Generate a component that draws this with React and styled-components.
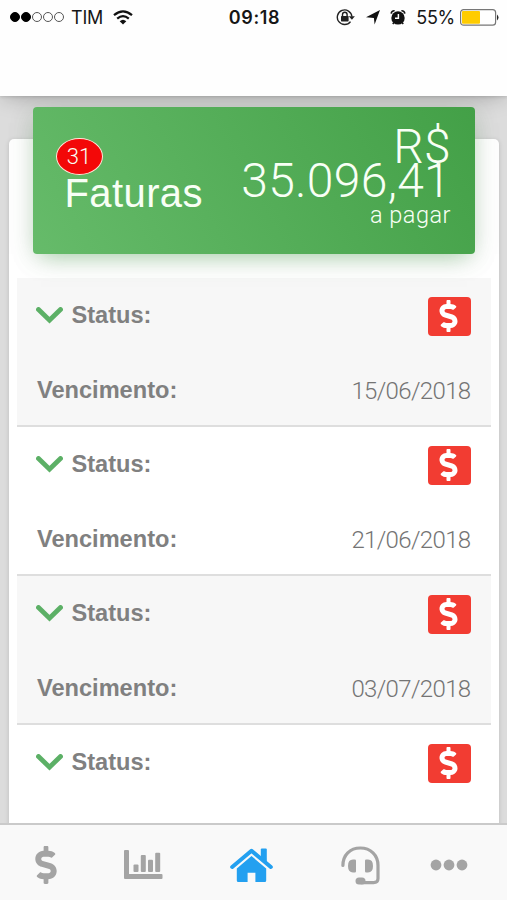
import styled, { createGlobalStyle } from "styled-components";
import { FaDollarSign } from "react-icons/fa";

const GlobalStyle = createGlobalStyle`
  * {
    box-sizing: border-box;
  }
  body {
    margin: 0;
    font-family: "Liberation Sans", Arial, sans-serif;
  }
`;

const Screen = styled.div`
  width: 507px;
  height: 900px;
  display: flex;
  flex-direction: column;
  overflow: hidden;
  background-color: #dcdcdc;
`;

const Header = styled.header`
  flex: none;
  height: 96px;
  background-color: #fefefe;
  box-shadow: 0 1px 3px rgba(0, 0, 0, 0.12), 0 4px 20px -4px rgba(0, 0, 0, 0.28);
`;

const StatusBar = styled.div`
  height: 34px;
  display: grid;
  grid-template-columns: 1fr auto 1fr;
  align-items: center;
  padding: 0 8px 0 10px;
  font-family: Inter, sans-serif;
  font-size: 18px;
  color: #161616;
`;

const StatusSide = styled.div`
  display: flex;
  align-items: center;
  justify-content: ${(props) => (props.$end ? "flex-end" : "flex-start")};
`;

const Signal = styled.div`
  display: flex;
  gap: 1px;
  margin-right: 7px;
`;

const Dot = styled.span`
  width: 10px;
  height: 10px;
  border-radius: 50%;
  border: 1px solid ${(props) => (props.$on ? "#000" : "#555")};
  background-color: ${(props) => (props.$on ? "#000" : "transparent")};
`;

const Carrier = styled.span`
  letter-spacing: -0.2px;
  margin-right: 10px;
`;

const Clock = styled.span`
  font-weight: 600;
  letter-spacing: 0.6px;
`;

const Percent = styled.span`
  margin: 0 5px 0 10px;
  letter-spacing: -0.3px;
`;

const Content = styled.main`
  flex: 1;
  min-height: 0;
  overflow: hidden;
  padding: 43px 8px 0 8.5px;
`;

const Card = styled.section`
  height: 800px;
  padding: 0 8px;
  border-radius: 5px;
  background-color: #fff;
  box-shadow: 0 1px 5px rgba(0, 0, 0, 0.14);
`;

const Summary = styled.div`
  position: relative;
  display: flex;
  justify-content: space-between;
  height: 147px;
  margin: 0 16px 24px;
  padding: 23px 24px 0 32px;
  top: -32px;
  margin-bottom: -8px;
  border-radius: 4px;
  color: #f8fff5;
  background: linear-gradient(60deg, #66bb6a, #43a047);
  box-shadow: 0 8px 22px -8px rgba(76, 175, 80, 0.5),
    0 4px 28px rgba(0, 0, 0, 0.1);
`;

const Badge = styled.span`
  position: absolute;
  left: 23px;
  top: 31px;
  width: 47px;
  height: 37px;
  display: flex;
  align-items: center;
  justify-content: center;
  border: 1.5px solid #ffe9dc;
  border-radius: 50%;
  background-color: #f30808;
  font-family: Roboto, sans-serif;
  font-weight: 300;
  font-size: 22px;
`;

const SummaryTitle = styled.h2`
  margin: 40px 0 0;
  font-size: 40px;
  line-height: 46px;
  font-weight: 400;
  letter-spacing: 0.4px;
`;

const Amount = styled.div`
  width: 218px;
  text-align: right;
  font-family: Roboto, sans-serif;
  font-weight: 300;
  font-size: 48px;
  line-height: 33.5px;
  letter-spacing: 0.3px;
`;

const AmountLabel = styled.div`
  font-size: 23.5px;
  line-height: 36px;
  letter-spacing: 0.5px;
`;

const Row = styled.div`
  height: 149px;
  padding: 18px 20.5px 0;
  border-bottom: 2px solid #dedede;
  background-color: ${(props) => (props.$striped ? "#f7f7f7" : "#fff")};
`;

const Line = styled.div`
  display: flex;
  align-items: center;
  justify-content: space-between;
  height: ${(props) => props.$height}px;
`;

const Label = styled.span`
  display: flex;
  align-items: center;
  gap: 9px;
  font-size: 23.6px;
  font-weight: 700;
  color: #808080;
`;

const DueDate = styled.span`
  font-family: Roboto, sans-serif;
  font-size: 24px;
  font-weight: 300;
  letter-spacing: -0.65px;
  color: #747474;
`;

const PayButton = styled.button`
  width: 43px;
  height: 39px;
  display: flex;
  align-items: center;
  justify-content: center;
  margin-top: 2px;
  padding: 0 1px 1px 0;
  border: none;
  border-radius: 4px;
  background-color: #f23c32;
  color: #fff;
  cursor: pointer;
`;

const TabBar = styled.nav`
  flex: none;
  height: 77px;
  display: grid;
  grid-template-columns: 91px 104px 113px 104px 73px;
  align-items: center;
  padding-top: 5px;
  border-top: 2px solid #cacaca;
  background-color: #f9f9f9;
`;

const Tab = styled.a`
  display: flex;
  align-items: center;
  justify-content: center;
  color: ${(props) => (props.$active ? "#23a0f0" : "#a4a4a4")};
`;

const WifiIcon = () => (
  <svg width="20" height="15" viewBox="0 0 20 15" fill="none" stroke="#111" strokeWidth="2.2">
    <path d="M1 5.2Q10-2.5 19 5.2M4.2 8.6Q10 3.6 15.8 8.6" />
    <path d="M6.7 11.2Q10 8.2 13.3 11.2L10 14.5Z" fill="#111" stroke="none" />
  </svg>
);

const LockIcon = () => (
  <svg width="19" height="18" viewBox="0 0 19 18" fill="none" stroke="#222">
    <path d="M14.5 13.6A7.3 7.3 0 1 1 15.9 8.6" strokeWidth="1.4" />
    <path d="M12.8 8.2H18.9L15.9 11.8Z" fill="#222" stroke="none" />
    <rect x="5" y="8" width="7.6" height="5.4" rx=".6" fill="#222" stroke="none" />
    <path d="M6.5 8V6.6a2.3 2.3 0 0 1 4.6 0V8" strokeWidth="1.4" />
  </svg>
);

const LocationIcon = () => (
  <svg width="14" height="15" viewBox="0 0 14 15" style={{ margin: "0 10px 0 11px" }}>
    <path d="M14 0L8.6 14.5L7.9 8L0 7.2Z" fill="#111" />
  </svg>
);

const AlarmIcon = () => (
  <svg width="16" height="17" viewBox="0 0 16 17">
    <circle cx="8" cy="8.9" r="6.7" fill="#111" />
    <path d="M1.2 4.6A3 3 0 0 1 4.6 1.8M14.8 4.6A3 3 0 0 0 11.4 1.8M3.8 13.6L2.8 15M12.2 13.6L13.2 15" stroke="#111" strokeWidth="1.6" fill="none" />
    <path d="M8.4 5V9.3H5" stroke="#fff" strokeWidth="1.5" fill="none" />
  </svg>
);

const BatteryIcon = () => (
  <svg width="39" height="17" viewBox="0 0 39 17">
    <rect x=".6" y=".6" width="35" height="15.6" rx="3" fill="#fff" stroke="#777" strokeWidth="1.2" />
    <rect x="2" y="2" width="18" height="12.8" rx="1" fill="#fc0" />
    <path d="M37 5.5Q40 8.5 37 11.5Z" fill="#222" />
  </svg>
);

const ChevronIcon = () => (
  <svg width="27" height="17" viewBox="0 0 27 17" style={{ marginLeft: -1.5 }}>
    <path d="M2.5 2.5L13.5 13.2L24.5 2.5" fill="none" stroke="#5cb066" strokeWidth="4.8" strokeLinecap="round" />
  </svg>
);

const ChartIcon = () => (
  <svg width="39" height="30" viewBox="0 0 39 30" fill="currentColor">
    <path d="M1 0H4Q5 0 5 1V24H37.5Q38.5 24 38.5 25V28Q38.5 29 37.5 29H1Q0 29 0 28V1Q0 0 1 0Z" />
    <rect x="9.5" y="14.5" width="5" height="7.5" rx="1" />
    <rect x="16.8" y="5" width="5" height="17" rx="1" />
    <rect x="24" y="9.7" width="5" height="12.3" rx="1" />
    <rect x="31.2" y="2.7" width="5" height="19.3" rx="1" />
  </svg>
);

const HomeIcon = () => (
  <svg width="43" height="35" viewBox="0 0 43 35" fill="currentColor">
    <path d="M2.2 19L21.5 2.8L40.8 19" fill="none" stroke="currentColor" strokeWidth="4" strokeLinecap="round" strokeLinejoin="round" />
    <path d="M30.8 1.5Q30.8.5 31.8.5H35.8Q36.8.5 36.8 1.5V15L30.8 9.8Z" />
    <path d="M6.8 20.5L21.5 8L36.2 20.5V32.5Q36.2 34 34.7 34H25.4V24.8H17.6V34H8.3Q6.8 34 6.8 32.5Z" />
  </svg>
);

const SupportIcon = () => (
  <svg width="39" height="39" viewBox="0 0 39 39" fill="none" stroke="currentColor" strokeWidth="3.2" strokeLinecap="round">
    <path d="M1.9 19.5C1.9 9 9 2 19.3 2S37 9 37 19.5V32.5Q37 36.6 32.5 36.6H20" />
    <path d="M13.8 13.6H12Q7 13.6 7 20T12 26.4H13.8Q15 26.4 15 25.2V14.8Q15 13.6 13.8 13.6ZM25.2 13.6H27Q32 13.6 32 20T27 26.4H25.2Q24 26.4 24 25.2V14.8Q24 13.6 25.2 13.6Z" fill="currentColor" stroke="none" />
    <rect x="14.5" y="31.5" width="10" height="7" rx="3.5" fill="currentColor" stroke="none" />
  </svg>
);

const MoreIcon = () => (
  <svg width="38" height="12" viewBox="0 0 38 12" fill="currentColor">
    <circle cx="6" cy="6" r="5.4" />
    <circle cx="19" cy="6" r="5.4" />
    <circle cx="32" cy="6" r="5.4" />
  </svg>
);

const DollarTabIcon = styled(FaDollarSign)`
  width: 22px;
  height: 38px;
`;

const DollarIcon = styled(FaDollarSign)`
  width: 19px;
  height: 32px;
`;

const invoices = [
  { id: 1, due: "15/06/2018" },
  { id: 2, due: "21/06/2018" },
  { id: 3, due: "03/07/2018" },
  { id: 4 },
];

const Invoice = ({ due, striped }) => (
  <Row $striped={striped}>
    <Line $height={38}>
      <Label>
        <ChevronIcon />
        Status:
      </Label>
      <PayButton>
        <DollarIcon />
      </PayButton>
    </Line>
    {due && (
      <Line $height={113}>
        <Label>Vencimento:</Label>
        <DueDate>{due}</DueDate>
      </Line>
    )}
  </Row>
);

const App = () => {
  return (
    <>
      <GlobalStyle />
      <Screen>
        <Header>
          <StatusBar>
            <StatusSide>
              <Signal>
                {[1, 2, 3, 4, 5].map((n) => (
                  <Dot key={n} $on={n <= 2} />
                ))}
              </Signal>
              <Carrier>TIM</Carrier>
              <WifiIcon />
            </StatusSide>
            <Clock>09:18</Clock>
            <StatusSide $end>
              <LockIcon />
              <LocationIcon />
              <AlarmIcon />
              <Percent>55%</Percent>
              <BatteryIcon />
            </StatusSide>
          </StatusBar>
        </Header>
        <Content>
          <Card>
            <Summary>
              <SummaryTitle>Faturas</SummaryTitle>
              <Badge>31</Badge>
              <Amount>
                R$ 35.096,41
                <AmountLabel>a pagar</AmountLabel>
              </Amount>
            </Summary>
            {invoices.map((item, index) => (
              <Invoice key={item.id} due={item.due} striped={index % 2 === 0} />
            ))}
          </Card>
        </Content>
        <TabBar>
          <Tab>
            <DollarTabIcon />
          </Tab>
          <Tab>
            <ChartIcon />
          </Tab>
          <Tab $active>
            <HomeIcon />
          </Tab>
          <Tab>
            <SupportIcon />
          </Tab>
          <Tab>
            <MoreIcon />
          </Tab>
        </TabBar>
      </Screen>
    </>
  );
};

export default App;
